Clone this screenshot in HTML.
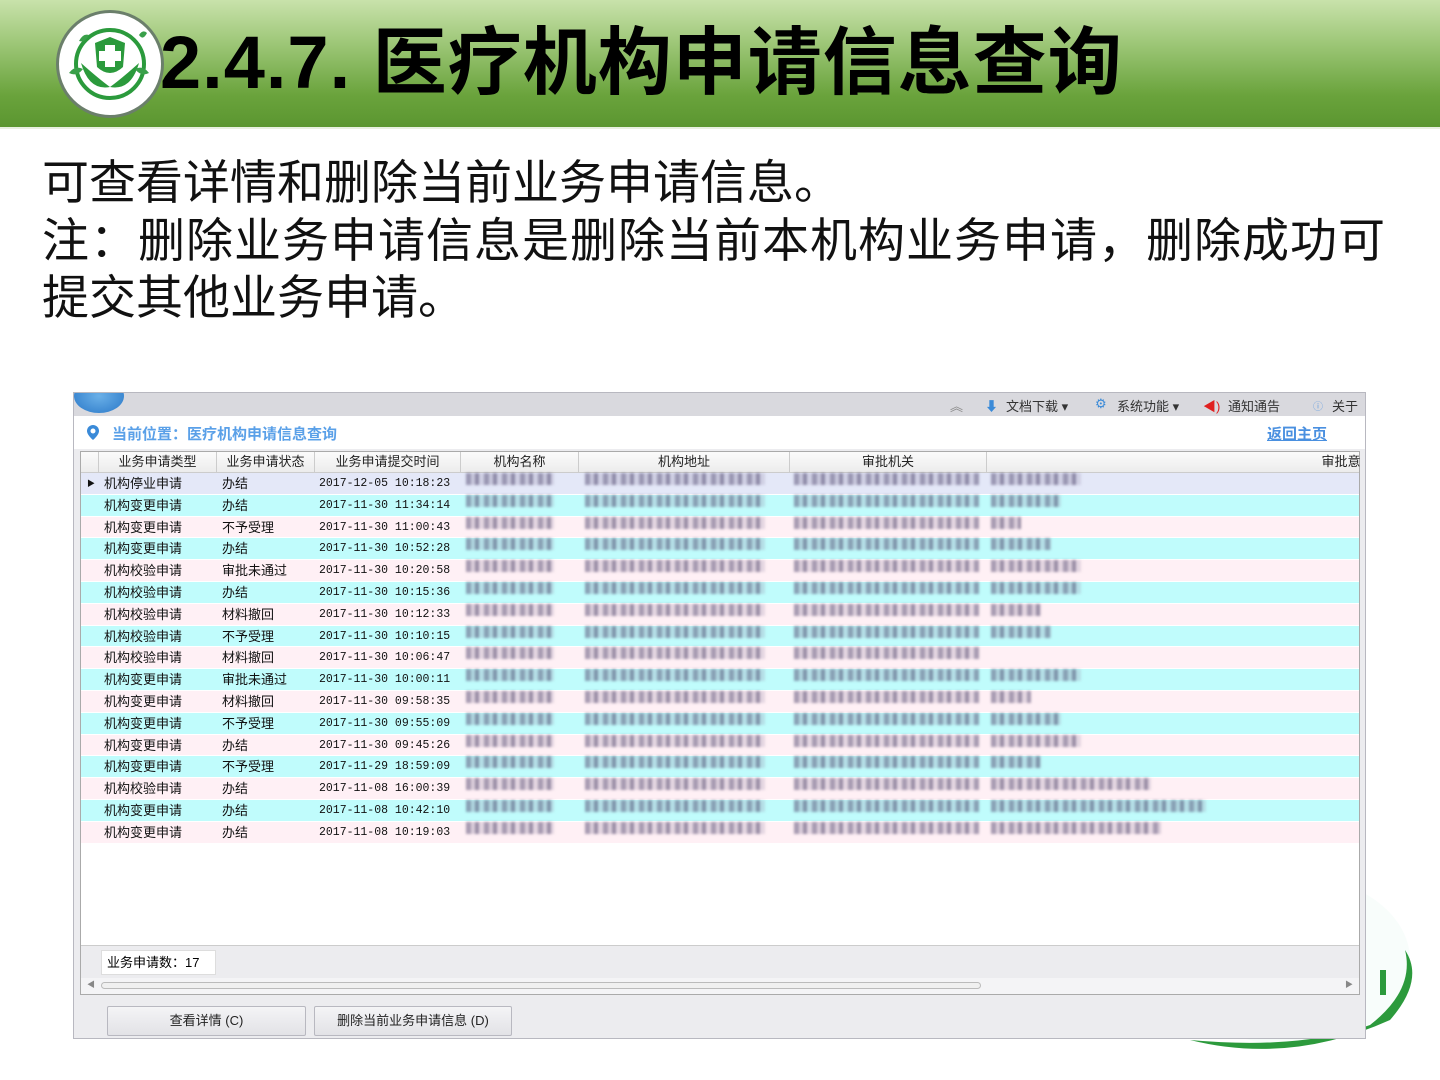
<!DOCTYPE html>
<html><head><meta charset="utf-8"><style>
*{margin:0;padding:0;box-sizing:border-box}
body{width:1440px;height:1080px;position:relative;background:#fff;overflow:hidden;font-family:"Liberation Sans","Noto Sans CJK SC",sans-serif}
.hdr{position:absolute;left:0;top:0;width:1440px;height:129px;background:linear-gradient(#c9e2ab 0%,#9cc676 35%,#6aa33c 75%,#5b9630 100%);border-bottom:2px solid #e8f0e0}
.title{position:absolute;left:160px;top:18px;font-size:74px;font-weight:bold;color:#000;letter-spacing:1px;line-height:90px}
.logo{position:absolute;left:56px;top:10px;width:108px;height:108px;border-radius:50%;background:#fff;border:3px solid #6b7f6b}
.txt{position:absolute;left:42px;font-size:47px;color:#111;line-height:56px;font-family:"Liberation Sans","Noto Sans CJK SC",sans-serif}
.win{position:absolute;left:73px;top:392px;width:1293px;height:647px;background:#ececef;border:1px solid #b8b8c0;overflow:hidden}
.tb{position:absolute;left:0;top:0;width:1291px;height:23px;background:#d9d9de;font-size:13px;color:#333}
.tb span{position:absolute;top:3px}
.loc{position:absolute;left:0;top:23px;width:1291px;height:33px;background:#fff}
.grid{position:absolute;left:6px;top:58px;width:1280px;height:544px;background:#fff;border:1px solid #aaa}
.gh{position:absolute;left:0;top:0;height:21px;width:1278px;background:linear-gradient(#fbfbfb,#ececec);border-bottom:1px solid #ccc;font-size:13px;color:#222}
.gh div{position:absolute;top:0;height:21px;line-height:20px;text-align:center;border-right:1px solid #ccc}
.row{position:absolute;left:0;width:1278px;height:21.8px;font-size:13px;color:#111;border-bottom:1px solid #fff}
.row div{position:absolute;top:0;line-height:21px}
.b{position:absolute;height:12px;top:5px;filter:blur(1.2px);background:repeating-linear-gradient(90deg,rgba(80,70,110,.5) 0 5px,rgba(140,130,160,.3) 5px 9px,rgba(70,60,100,.55) 9px 13px,rgba(150,140,170,.25) 13px 18px)}
.btn{position:absolute;top:10px;height:30px;border:1px solid #b8b8c0;border-radius:2px;background:linear-gradient(#f4f4f6,#e2e2e6);font-size:13px;text-align:center;line-height:28px;color:#222}
</style></head><body>
<div class="hdr"></div>
<div class="logo"><svg width="102" height="102" viewBox="0 0 102 102"><circle cx="51" cy="51" r="34" fill="none" stroke="#2b9a3c" stroke-width="4"/><path d="M36 30 L51 24 L66 30 L64 54 Q51 66 38 54 Z" fill="#2b9a3c"/><rect x="46" y="32" width="10" height="22" fill="#fff"/><rect x="40" y="38" width="22" height="10" fill="#fff"/><path d="M22 50 Q30 78 51 74 Q40 66 22 50Z M80 50 Q72 78 51 74 Q62 66 80 50Z" fill="#2b9a3c"/><path d="M10 60 Q16 52 24 56 Q18 64 10 60Z M90 60 Q84 52 76 56 Q82 64 90 60Z M20 28 Q24 20 30 22 Q26 30 20 28Z M80 22 Q84 16 88 20 Q84 28 80 22Z" fill="#3aa04a"/></svg></div>
<div class="title">2.4.7. 医疗机构申请信息查询</div>
<div class="txt" style="top:155px">可查看详情和删除当前业务申请信息。</div>
<div class="txt" style="top:213px;letter-spacing:1px">注：删除业务申请信息是删除当前本机构业务申请，删除成功可</div>
<div class="txt" style="top:270px">提交其他业务申请。</div>
<svg style="position:absolute;left:1170px;top:880px" width="260" height="180"><ellipse cx="120" cy="80" rx="120" ry="85" fill="#f2fbf8" opacity=".5"/><path d="M20 160 Q120 185 220 140 Q255 100 235 70 Q245 110 200 145 Q130 170 20 160Z" fill="#2c9a3c"/><rect x="210" y="90" width="6" height="25" fill="#2c9a3c"/></svg>
<div class="win">
<div class="tb">
<div style="position:absolute;left:0;top:-14px;width:50px;height:34px;border-radius:50%;background:radial-gradient(#6ab0e8,#2a78c8)"></div>
<span style="left:876px;color:#888">︽</span>
<span style="left:911px;color:#3a8ad8">⬇</span><span style="left:932px">文档下载 ▾</span>
<span style="left:1021px;color:#3a8ad8">⚙</span><span style="left:1043px">系统功能 ▾</span>
<span style="left:1129px;color:#e02020">◀)</span><span style="left:1154px">通知通告</span>
<span style="left:1239px;color:#6aa0e0;font-size:10px;top:5px">ⓘ</span><span style="left:1258px">关于</span>
</div>
<div class="loc">
<svg style="position:absolute;left:12px;top:8px" width="14" height="17"><path d="M7 1a6 6 0 0 0-6 6c0 4 6 9 6 9s6-5 6-9a6 6 0 0 0-6-6z" fill="#3a8ad8"/><circle cx="7" cy="7" r="2.5" fill="#fff"/></svg>
<div style="position:absolute;left:38px;top:7px;font-size:15px;font-weight:bold;color:#5aa0e8">当前位置：医疗机构申请信息查询</div>
<div style="position:absolute;left:1193px;top:7px;font-size:15px;font-weight:bold;color:#4a90e0;text-decoration:underline">返回主页</div>
</div>
<div class="grid">
<div class="gh">
<div style="left:0;width:18px"></div>
<div style="left:18px;width:118px">业务申请类型</div>
<div style="left:136px;width:98px">业务申请状态</div>
<div style="left:234px;width:146px">业务申请提交时间</div>
<div style="left:380px;width:118px">机构名称</div>
<div style="left:498px;width:211px">机构地址</div>
<div style="left:709px;width:197px">审批机关</div>
<div style="left:1240px;width:40px;border:0">审批意</div>
</div>
<div id="rows"></div>
<div style="position:absolute;left:0;top:493px;width:1278px;height:49px;background:#ececef;border-top:1px solid #ccc">
<div style="position:absolute;left:20px;top:4px;width:115px;height:25px;background:#fff;border:1px solid #ddd;font-size:13px;line-height:23px;padding-left:5px">业务申请数：17</div>
<div style="position:absolute;left:0;top:32px;width:1278px;height:16px;background:#f4f4f6"><div style="position:absolute;left:20px;top:4px;width:880px;height:7px;border:1px solid #bbb;border-radius:4px;background:#f0f0f0"></div><span style="position:absolute;left:6px;top:1px;font-size:8px;color:#888">◀</span><span style="position:absolute;left:1264px;top:1px;font-size:8px;color:#888">▶</span></div>
</div>
</div>
<div style="position:absolute;left:0;top:603px;width:1291px;height:43px">
<div class="btn" style="left:33px;width:199px">查看详情 (C)</div>
<div class="btn" style="left:240px;width:198px">删除当前业务申请信息 (D)</div>
</div>
</div>
<script>
var d=[["机构停业申请","办结","2017-12-05 10:18:23"],["机构变更申请","办结","2017-11-30 11:34:14"],["机构变更申请","不予受理","2017-11-30 11:00:43"],["机构变更申请","办结","2017-11-30 10:52:28"],["机构校验申请","审批未通过","2017-11-30 10:20:58"],["机构校验申请","办结","2017-11-30 10:15:36"],["机构校验申请","材料撤回","2017-11-30 10:12:33"],["机构校验申请","不予受理","2017-11-30 10:10:15"],["机构校验申请","材料撤回","2017-11-30 10:06:47"],["机构变更申请","审批未通过","2017-11-30 10:00:11"],["机构变更申请","材料撤回","2017-11-30 09:58:35"],["机构变更申请","不予受理","2017-11-30 09:55:09"],["机构变更申请","办结","2017-11-30 09:45:26"],["机构变更申请","不予受理","2017-11-29 18:59:09"],["机构校验申请","办结","2017-11-08 16:00:39"],["机构变更申请","办结","2017-11-08 10:42:10"],["机构变更申请","办结","2017-11-08 10:19:03"]];
var w4=[90,70,30,60,90,90,50,60,0,90,40,70,90,50,160,215,170];
var h="";for(var i=0;i<17;i++){var bg=i==0?"#e4e8f8":(i%2?"#c0fcfc":"#fff0f5");
h+='<div class="row" style="top:'+(21+i*21.8)+'px;background:'+bg+'">'+(i==0?'<div style="left:6px;font-size:8px">▶</div>':'')+'<div style="left:23px">'+d[i][0]+'</div><div style="left:141px">'+d[i][1]+'</div><div style="left:238px;font-family:Liberation Mono,monospace;font-size:11.5px">'+d[i][2]+'</div><div class="b" style="left:385px;width:88px"></div><div class="b" style="left:504px;width:180px"></div><div class="b" style="left:713px;width:185px"></div>'+(w4[i]?'<div class="b" style="left:910px;width:'+w4[i]+'px"></div>':'')+'</div>';}
document.getElementById("rows").innerHTML=h;
</script>
</body></html>
